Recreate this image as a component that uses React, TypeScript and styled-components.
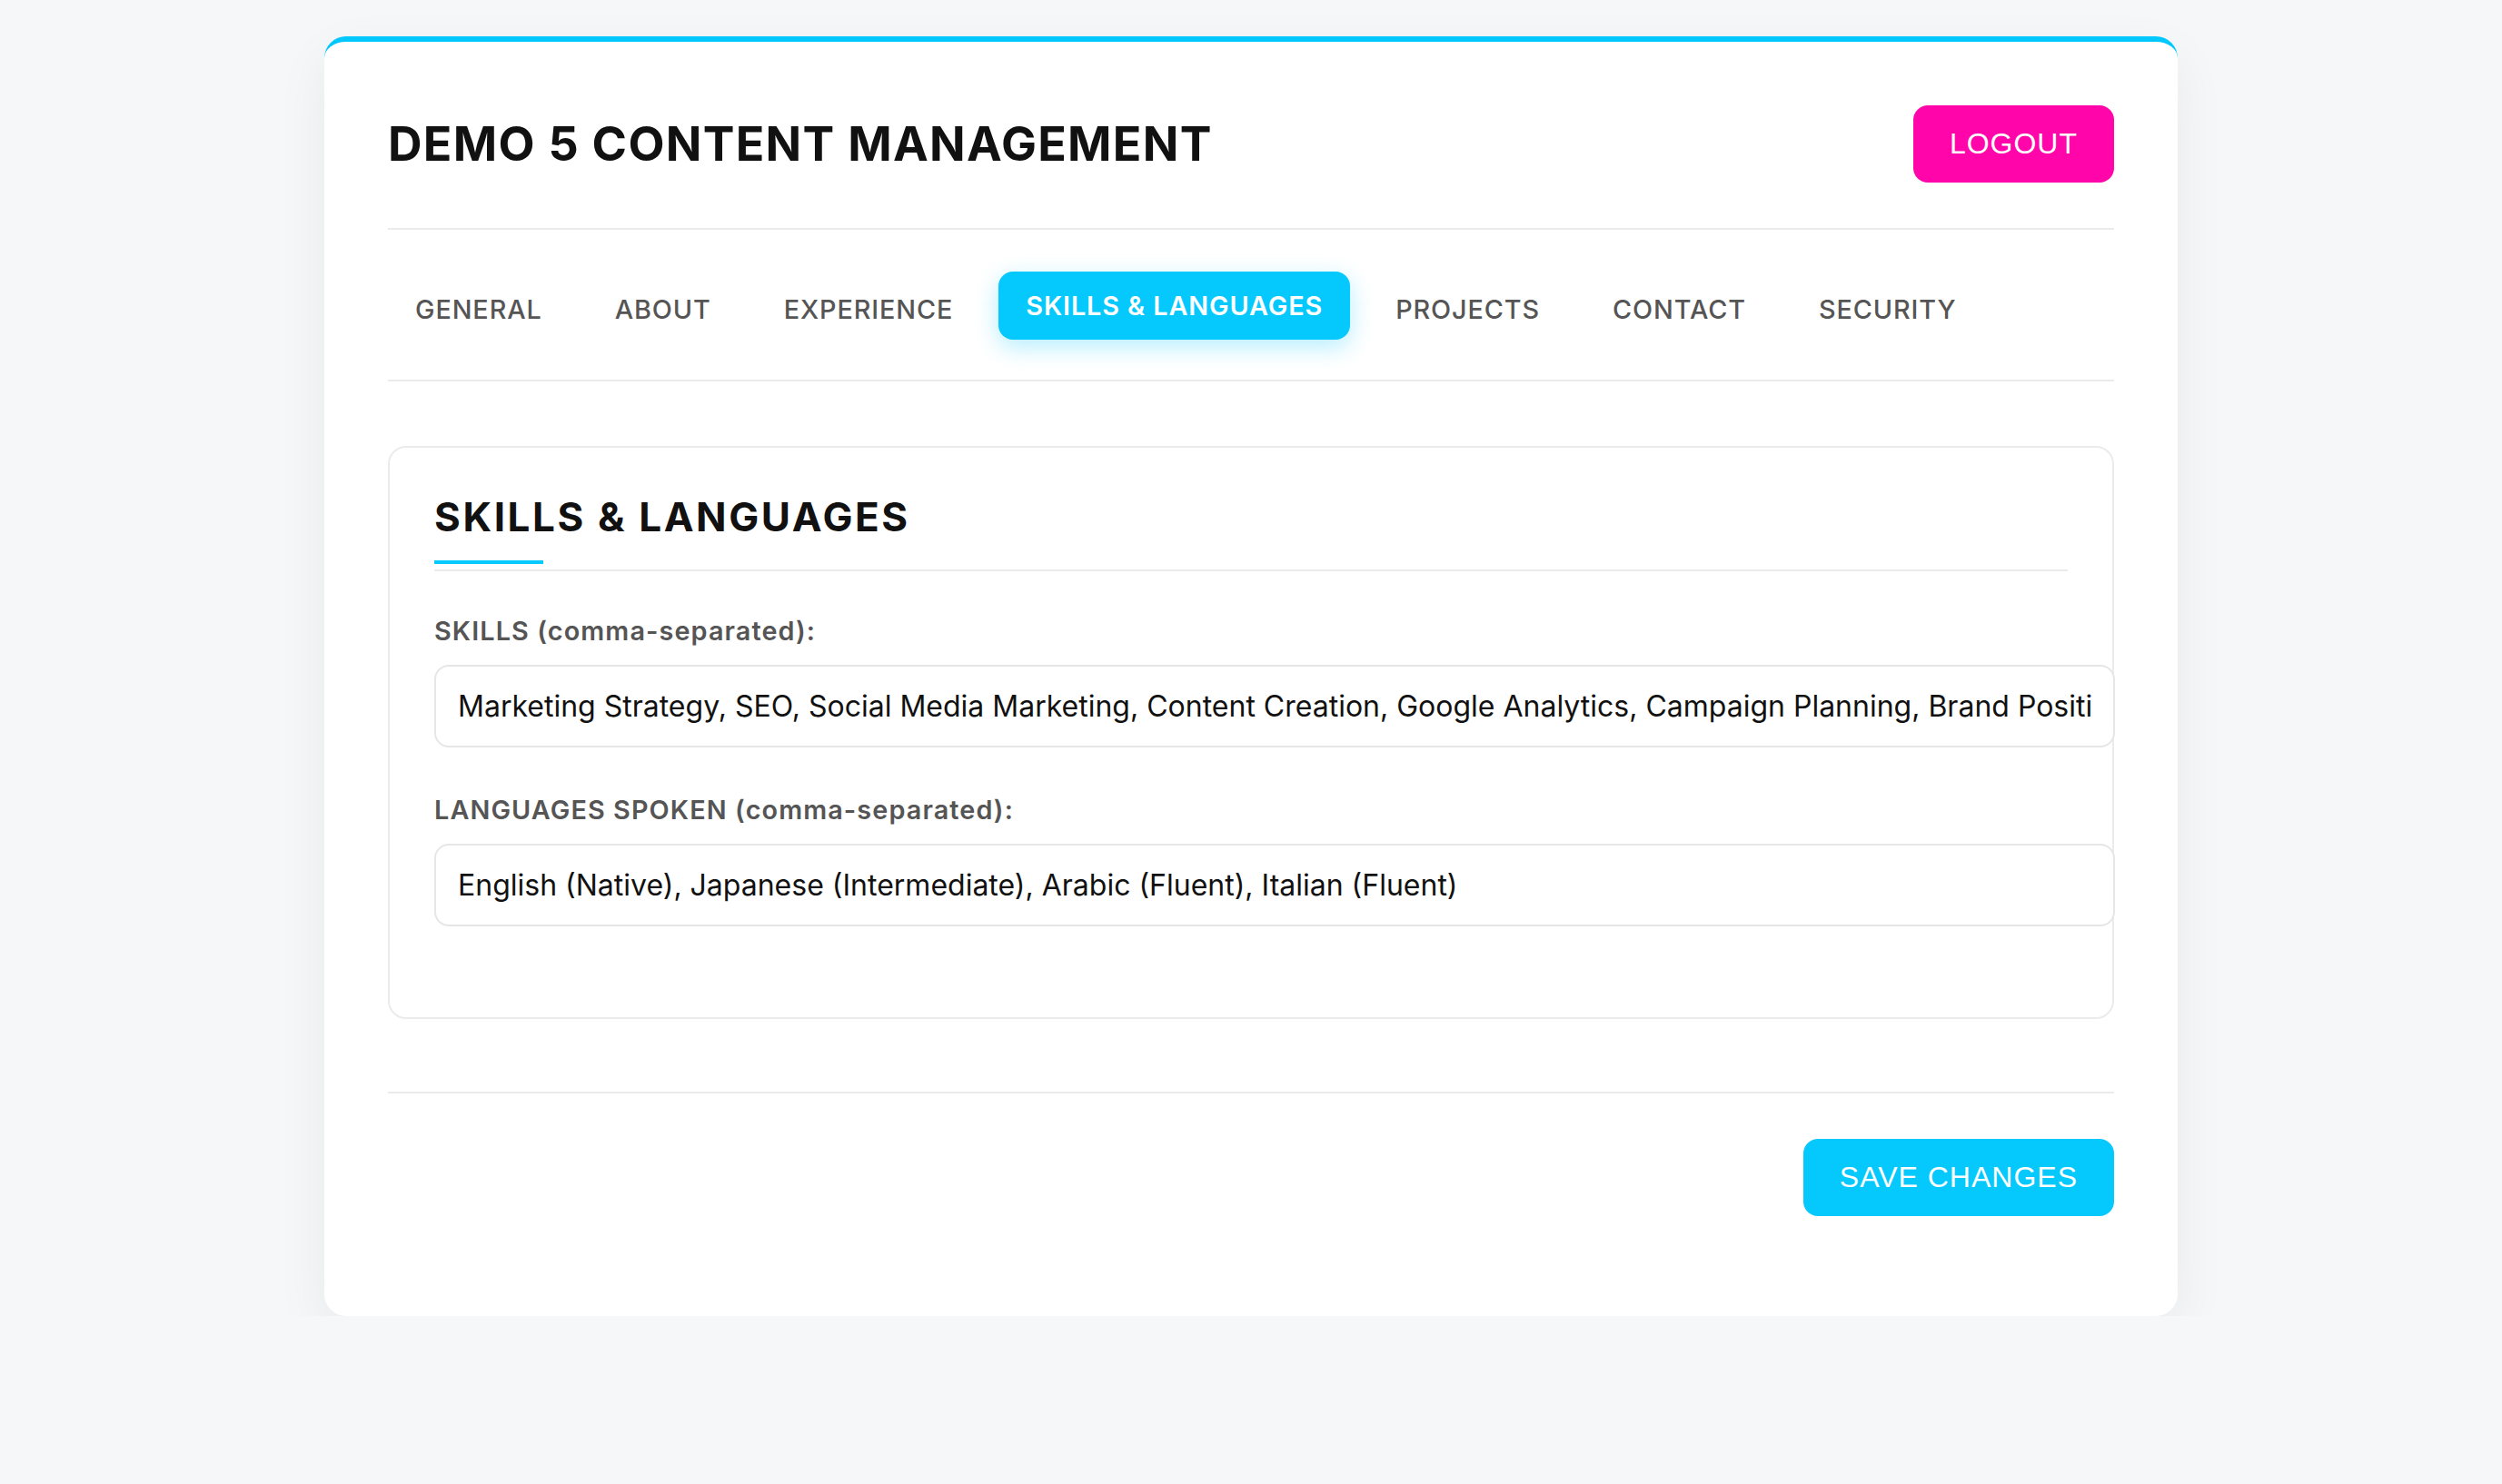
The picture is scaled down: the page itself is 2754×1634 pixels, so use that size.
import React from 'react';
import styled, { createGlobalStyle } from 'styled-components';

const GlobalStyle = createGlobalStyle`
  body {
    margin: 0;
    background: #f6f7f9;
    font-family: Inter, "Noto Sans", sans-serif;
    color: #111;
  }
`;

const Card = styled.div`
  width: 1900px;
  margin: 40px auto 0;
  padding: 70px;
  background: #fff;
  border-top: 6px solid #00c8ff;
  border-radius: 24px;
  box-shadow: 0 20px 60px rgba(0, 0, 0, 0.06);
`;

const Header = styled.header`
  display: flex;
  justify-content: space-between;
  align-items: center;
  padding-bottom: 50px;
  border-bottom: 2px solid #ebebeb;
`;

const Title = styled.h1`
  margin: 0;
  font-size: 52px;
  font-weight: 700;
  letter-spacing: 1.3px;
  color: #111;
`;

const Button = styled.button<{ $tone: 'pink' | 'blue' }>`
  padding: 24px 40px;
  border: none;
  border-radius: 16px;
  background: ${(p) => (p.$tone === 'pink' ? '#ff05aa' : '#05c8fd')};
  color: #fff;
  font-family: "Liberation Sans", Arial, sans-serif;
  font-size: 32px;
  letter-spacing: 1px;
  text-transform: uppercase;
  cursor: pointer;
`;

const Tabs = styled.nav`
  display: flex;
  gap: 20px;
  padding: 50px 0 40px;
  border-bottom: 2px solid #ebebeb;
`;

const Tab = styled.button<{ $active?: boolean }>`
  padding: 20px 30px;
  border: none;
  border-radius: 16px;
  background: ${(p) => (p.$active ? '#05c8fd' : 'transparent')};
  color: ${(p) => (p.$active ? '#fff' : '#555')};
  font-family: Inter, sans-serif;
  font-size: 28.8px;
  font-weight: ${(p) => (p.$active ? 600 : 500)};
  letter-spacing: 0.9px;
  text-transform: uppercase;
  transform: ${(p) => (p.$active ? 'translateY(-4px)' : 'none')};
  box-shadow: ${(p) => (p.$active ? '0 8px 26px rgba(5, 200, 253, 0.3)' : 'none')};
  cursor: pointer;
`;

const Panel = styled.section`
  margin-top: 71px;
  padding: 49px;
  border: 2px solid #ebebeb;
  border-radius: 20px;
`;

const SectionTitle = styled.h2`
  position: relative;
  margin: 0 0 48px;
  padding-bottom: 31px;
  border-bottom: 2px solid #ebebeb;
  font-size: 44px;
  font-weight: 700;
  letter-spacing: 2.6px;
  color: #111;

  &::after {
    content: '';
    position: absolute;
    left: 0;
    bottom: 6px;
    width: 120px;
    height: 4px;
    background: #05c8fd;
  }
`;

const Field = styled.div`
  margin-bottom: 51px;
`;

const Label = styled.label`
  display: block;
  margin-bottom: 20px;
  font-size: 28.8px;
  font-weight: 600;
  color: #555;
  letter-spacing: 1.1px;
`;

const Input = styled.input`
  width: 100%;
  padding: 24px;
  border: 2px solid #e6e6e6;
  border-radius: 16px;
  font-family: Inter, sans-serif;
  font-size: 32px;
  color: #111;
  background: #fff;
  outline: none;
`;

const Actions = styled.div`
  display: flex;
  justify-content: flex-end;
  margin-top: 80px;
  padding: 50px 0 40px;
  border-top: 2px solid #ebebeb;
`;

const tabs = ['General', 'About', 'Experience', 'Skills & Languages', 'Projects', 'Contact', 'Security'];

const App: React.FC = () => {
    return (
        <>
            <GlobalStyle />
            <Card>
                <Header>
                    <Title>DEMO 5 CONTENT MANAGEMENT</Title>
                    <Button $tone="pink">Logout</Button>
                </Header>
                <Tabs>
                    {tabs.map((t) => (
                        <Tab key={t} $active={t === 'Skills & Languages'}>{t}</Tab>
                    ))}
                </Tabs>
                <Panel>
                    <SectionTitle>SKILLS &amp; LANGUAGES</SectionTitle>
                    <Field>
                        <Label>SKILLS (comma-separated):</Label>
                        <Input
                            readOnly
                            value="Marketing Strategy, SEO, Social Media Marketing, Content Creation, Google Analytics, Campaign Planning, Brand Positioning, Email Marketing"
                        />
                    </Field>
                    <Field>
                        <Label>LANGUAGES SPOKEN (comma-separated):</Label>
                        <Input
                            readOnly
                            value="English (Native), Japanese (Intermediate), Arabic (Fluent), Italian (Fluent)"
                        />
                    </Field>
                </Panel>
                <Actions>
                    <Button $tone="blue">Save Changes</Button>
                </Actions>
            </Card>
        </>
    );
};

export default App;
